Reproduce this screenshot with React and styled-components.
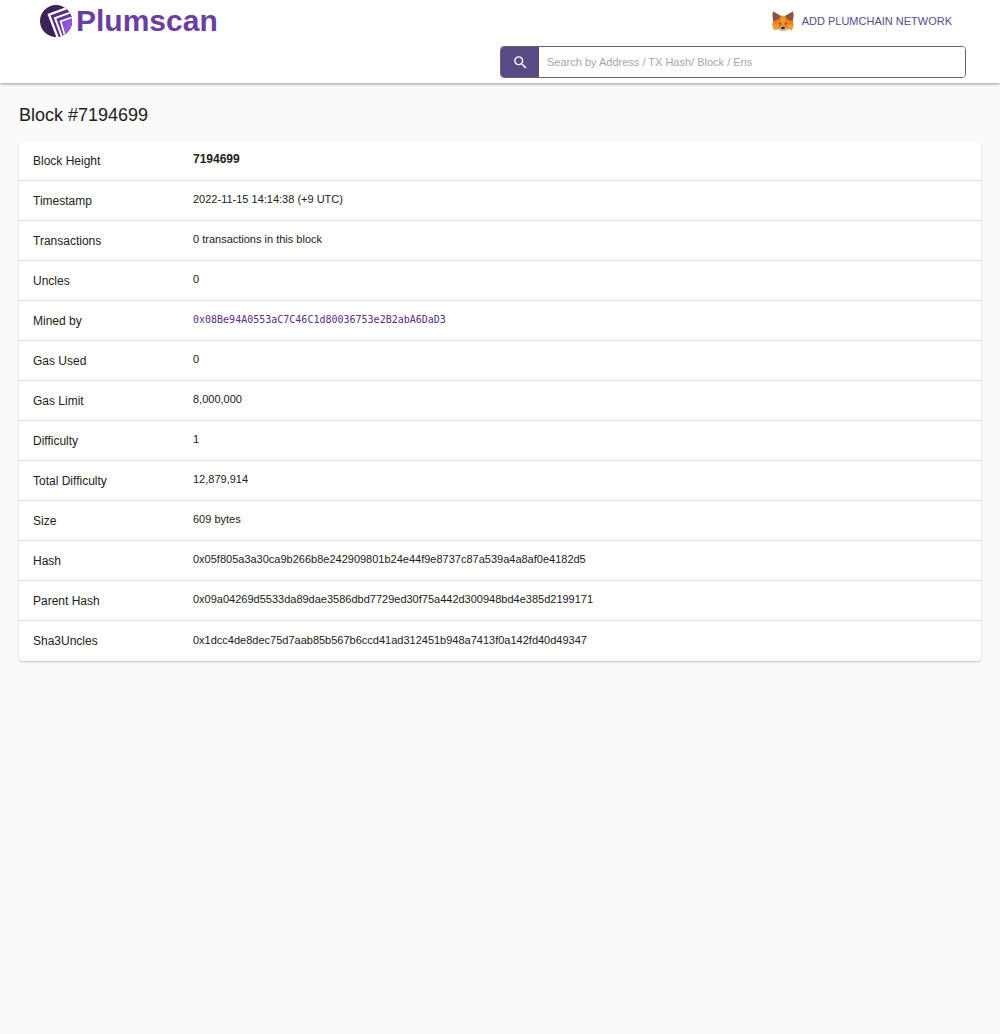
import React from "react";
import styled, { createGlobalStyle } from "styled-components";
import { MdSearch } from "react-icons/md";

const rows = [
  { label: "Block Height", value: "7194699", kind: "bold" },
  { label: "Timestamp", value: "2022-11-15 14:14:38 (+9 UTC)" },
  { label: "Transactions", value: "0 transactions in this block" },
  { label: "Uncles", value: "0" },
  {
    label: "Mined by",
    value: "0x08Be94A0553aC7C46C1d80036753e2B2abA6DaD3",
    kind: "address",
  },
  { label: "Gas Used", value: "0" },
  { label: "Gas Limit", value: "8,000,000" },
  { label: "Difficulty", value: "1" },
  { label: "Total Difficulty", value: "12,879,914" },
  { label: "Size", value: "609 bytes" },
  {
    label: "Hash",
    value: "0x05f805a3a30ca9b266b8e242909801b24e44f9e8737c87a539a4a8af0e4182d5",
  },
  {
    label: "Parent Hash",
    value: "0x09a04269d5533da89dae3586dbd7729ed30f75a442d300948bd4e385d2199171",
  },
  {
    label: "Sha3Uncles",
    value: "0x1dcc4de8dec75d7aab85b567b6ccd41ad312451b948a7413f0a142fd40d49347",
  },
];

const LogoMark = () => (
  <svg width="32" height="32" viewBox="0 0 96 96" aria-hidden="true">
    <defs>
      <clipPath id="disc">
        <circle cx="48" cy="48" r="48" />
      </clipPath>
      <linearGradient id="bright" x1="0" y1="0" x2="1" y2="1">
        <stop offset="0" stopColor="#7d4bc4" />
        <stop offset="1" stopColor="#a768f5" />
      </linearGradient>
    </defs>
    <g clipPath="url(#disc)" fill="none" stroke="#fff">
      <rect width="96" height="96" fill="#3b2259" stroke="none" />
      <path d="M100 2 L27 29 L54 100 H100 Z" fill="#50307f" strokeWidth="7" />
      <path d="M102 19 L45 39 L68 102 H102 Z" fill="#623a9c" strokeWidth="6" />
      <path d="M104 34 L62 49 L78 104 H104 Z" fill="url(#bright)" strokeWidth="5" />
    </g>
  </svg>
);

const Fox = () => (
  <svg width="22" height="20" viewBox="0 0 66 60" aria-hidden="true">
    <path d="M9 18 L26 14 H40 L57 18 L63 30 L65 42 L60 56 L48 54 L40 59 H26 L18 54 L6 56 L1 42 L3 30 Z" fill="#e8821e" />
    <path d="M3 1 L27 15 L20 25 L4 31 L1 14 Z" fill="#8a5340" />
    <path d="M63 1 L39 15 L46 25 L62 31 L65 14 Z" fill="#8a5340" />
    <path d="M26 15 H40 L37 45 H29 Z" fill="#f59427" />
    <path d="M1 42 L20 40 L18 54 L6 56 Z" fill="#f59a3a" />
    <path d="M65 42 L46 40 L48 54 L60 56 Z" fill="#f59a3a" />
    <path d="M20 38 L26 36 L28 41 Z" fill="#233447" />
    <path d="M46 38 L40 36 L38 41 Z" fill="#233447" />
    <path d="M20 53 L28 48 H38 L46 53 L40 59 H26 Z" fill="#d4bfb0" />
    <path d="M29 48 H37 L39 54 H27 Z" fill="#30241f" />
  </svg>
);

const App = () => {
  return (
    <>
      <GlobalStyle />
      <Header>
        <TopBar>
          <Brand href="#">
            <LogoMark />
            <BrandName>Plumscan</BrandName>
          </Brand>
          <NetworkButton type="button">
            <Fox />
            ADD PLUMCHAIN NETWORK
          </NetworkButton>
        </TopBar>
        <SearchForm role="search" onSubmit={(e) => e.preventDefault()}>
          <SearchButton type="submit" aria-label="Search">
            <MdSearch size={17} />
          </SearchButton>
          <SearchInput
            type="text"
            aria-label="Search by Address / TX Hash/ Block / Ens"
            placeholder="Search by Address / TX Hash/ Block / Ens"
          />
        </SearchForm>
      </Header>
      <Main>
        <Title>Block #7194699</Title>
        <Card>
          <BlockTable>
            <tbody>
              {rows.map((row) => (
                <Row key={row.label}>
                  <Label scope="row">{row.label}</Label>
                  <Value $bold={row.kind === "bold"}>
                    {row.kind === "address" ? (
                      <Address href={`#${row.value}`}>{row.value}</Address>
                    ) : (
                      row.value
                    )}
                  </Value>
                </Row>
              ))}
            </tbody>
          </BlockTable>
        </Card>
      </Main>
    </>
  );
};

const GlobalStyle = createGlobalStyle`
  * {
    box-sizing: border-box;
  }

  body {
    margin: 0;
    background: #fafafa;
    color: #212121;
    font-family: "Liberation Sans", Arial, sans-serif;
  }

  button,
  input {
    font-family: inherit;
  }
`;

const Header = styled.header`
  padding-bottom: 5px;
  background: #fff;
  box-shadow: 0 1px 3px rgba(0, 0, 0, 0.4);
`;

const TopBar = styled.div`
  display: flex;
  align-items: center;
  justify-content: space-between;
  height: 41px;
  margin-bottom: 5px;
  padding: 0 48px 0 40px;
`;

const Brand = styled.a`
  display: flex;
  align-items: center;
  gap: 4px;
  text-decoration: none;
`;

const BrandName = styled.span`
  color: #6b3fa0;
  font-size: 30px;
  font-weight: 700;
  line-height: 41px;
`;

const NetworkButton = styled.button`
  display: flex;
  align-items: center;
  gap: 8px;
  padding: 0;
  border: 0;
  background: none;
  color: #594a8c;
  font-size: 11px;
  cursor: pointer;
`;

const SearchForm = styled.form`
  display: flex;
  height: 32px;
  margin: 0 34px 0 50%;
  border: 1px solid #666;
  border-radius: 4px;
  overflow: hidden;

  @media screen and (max-width: 600px) {
    margin-left: 34px;
  }
`;

const SearchButton = styled.button`
  display: flex;
  align-items: center;
  justify-content: center;
  flex: 0 0 38px;
  padding: 0;
  border: 0;
  background: #594a85;
  color: #fff;
  cursor: pointer;
`;

const SearchInput = styled.input`
  flex: 1;
  min-width: 0;
  padding: 0 8px;
  border: 0;
  outline: none;
  background: #fff;
  color: #212121;
  font-size: 11px;

  &::placeholder {
    color: #a6a6a6;
    opacity: 1;
  }
`;

const Main = styled.main`
  padding: 20px 19px;
`;

const Title = styled.h1`
  margin: 0 0 14px;
  font-size: 18px;
  font-weight: 400;
  line-height: 24px;
`;

const Card = styled.section`
  border-radius: 4px;
  background: #fff;
  box-shadow: 0 1px 2px rgba(0, 0, 0, 0.24);
  overflow-x: auto;
`;

const BlockTable = styled.table`
  width: 100%;
  border-collapse: separate;
  border-spacing: 0;
`;

const Row = styled.tr`
  height: 40px;

  &:not(:last-child) > * {
    border-bottom: 1px solid #e0e0e0;
  }
`;

const Label = styled.th`
  width: 160px;
  padding: 0 14px;
  font-size: 12px;
  font-weight: 400;
  text-align: left;
  white-space: nowrap;
`;

const Value = styled.td`
  padding: 0 14px 3px;
  font-size: ${({ $bold }) => ($bold ? "12px" : "11px")};
  font-weight: ${({ $bold }) => ($bold ? 700 : 400)};
`;

const Address = styled.a`
  color: #5b2a86;
  font-family: "DejaVu Sans Mono", monospace;
  font-size: 10px;
  text-decoration: none;
`;

export default App;
